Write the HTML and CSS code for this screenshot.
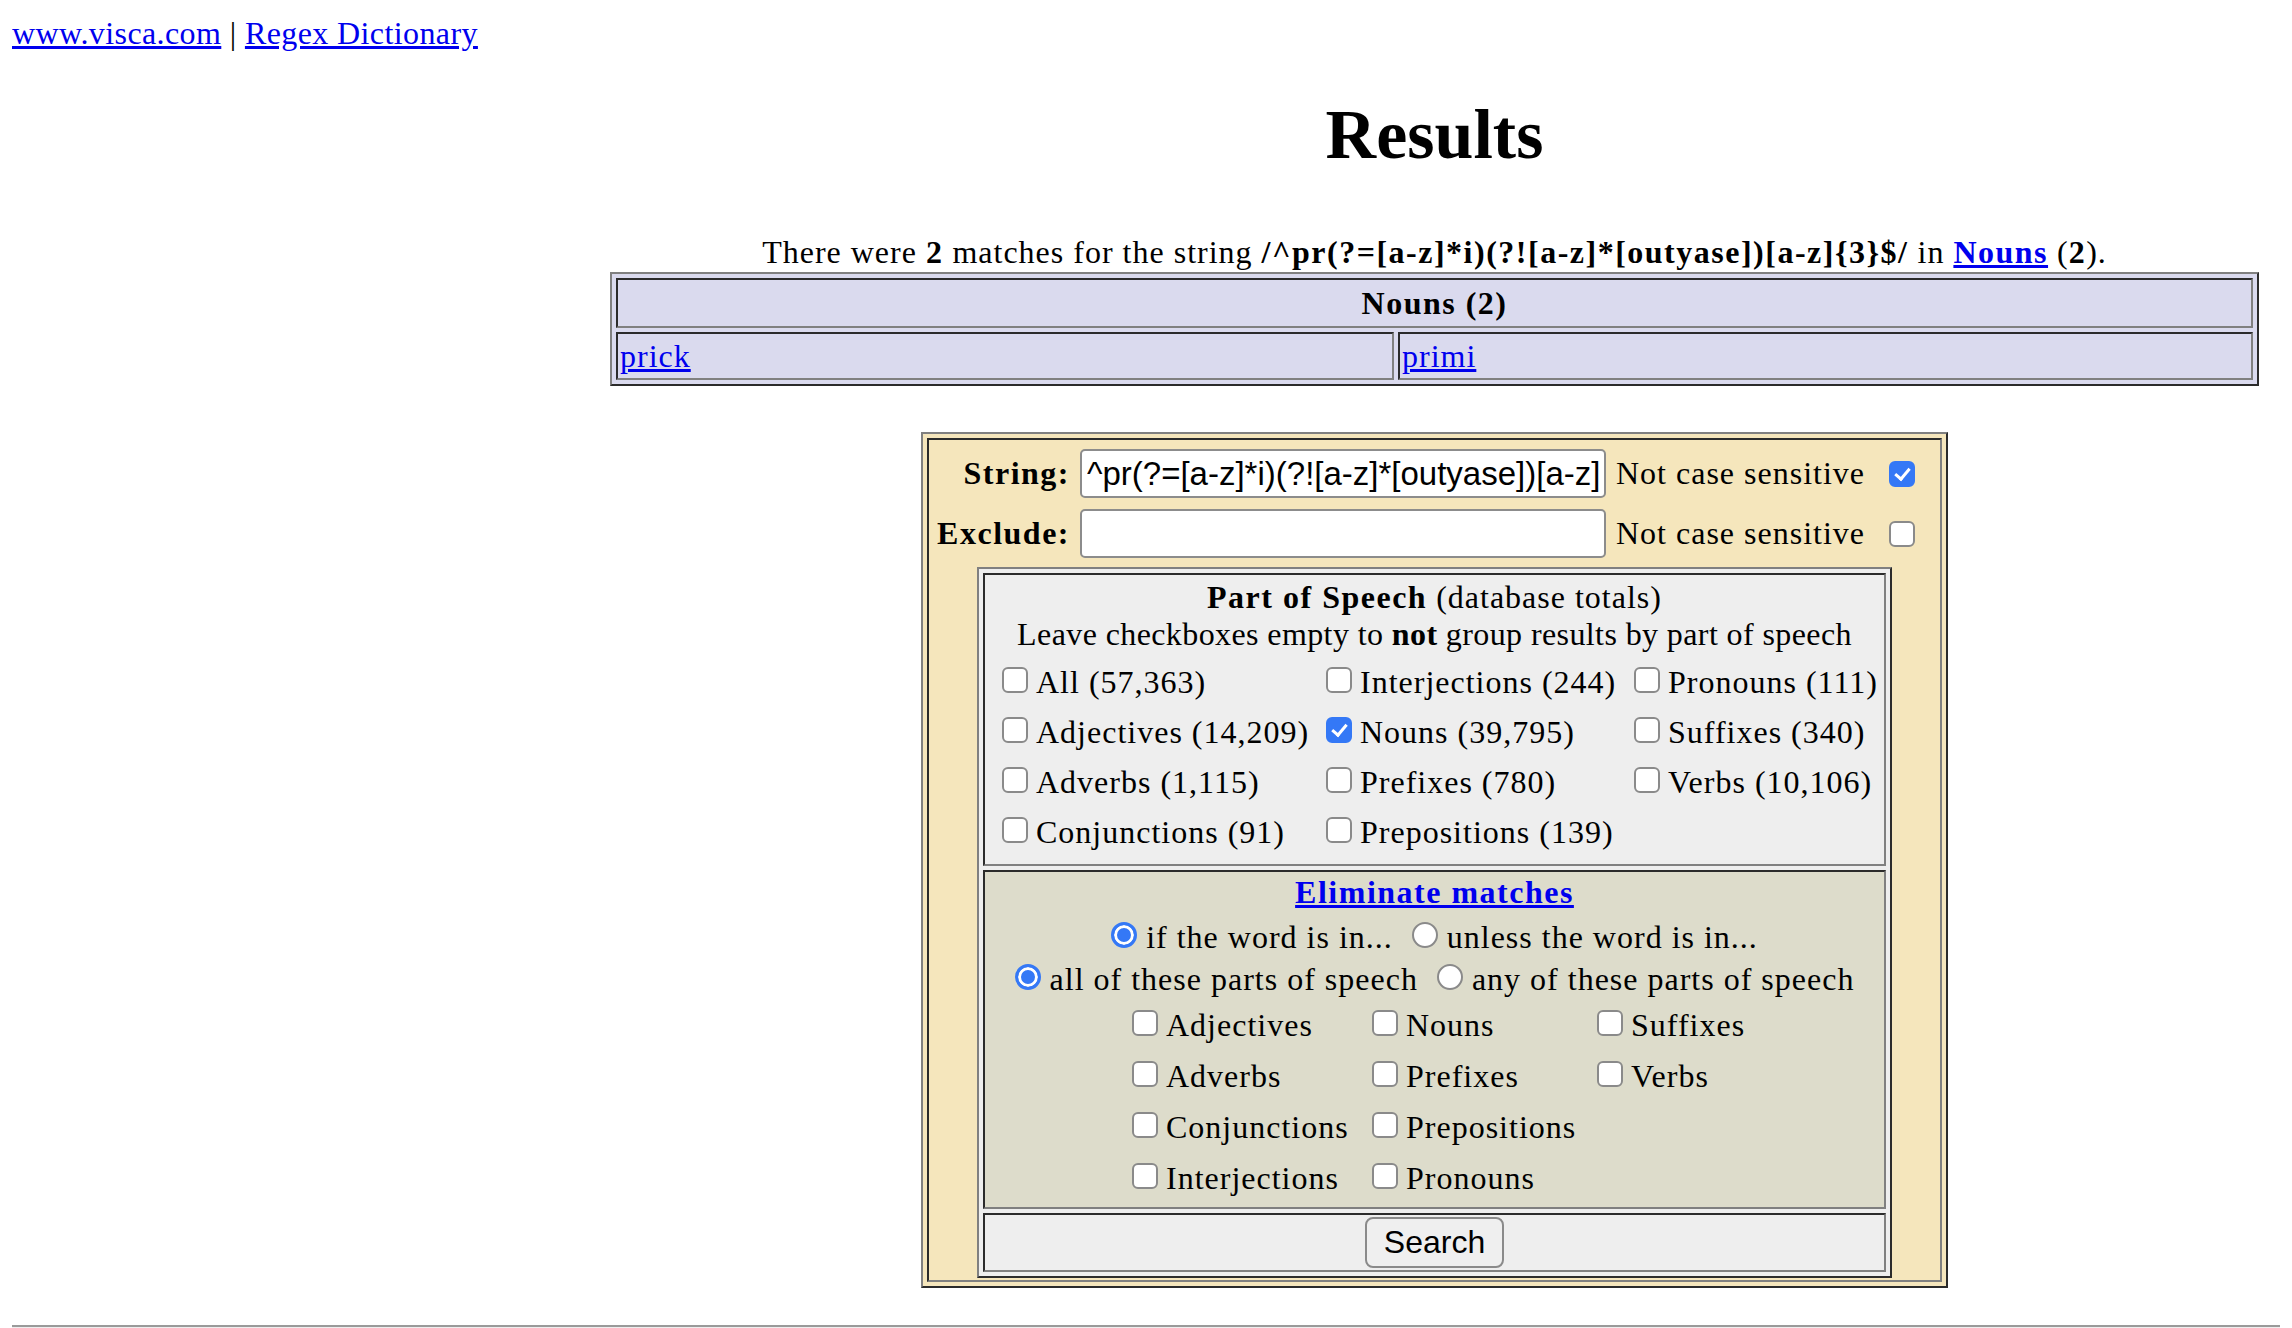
FILE: index.html
```html
<!DOCTYPE html>
<html lang="en">
<head>
  <meta charset="UTF-8">
  <title>Regex Dictionary - Results</title>
  <link rel="stylesheet" href="styles.css">
</head>
<body>
  <div class="crumbs"><a href="#">www.visca.com</a> | <a href="#">Regex Dictionary</a></div>

  <div class="layout">
    <div class="side"></div>

    <div class="main">
      <h1>Results</h1>

      <p class="summary">There were <b>2</b> matches for the string <b>/^pr(?=[a-z]*i)(?![a-z]*[outyase])[a-z]{3}$/</b> in <a href="#nouns"><b>Nouns</b></a> (<b>2</b>).</p>
      <table class="words" id="nouns">
        <tr><th colspan="2">Nouns (2)</th></tr>
        <tr>
          <td class="first"><a href="#">prick</a></td>
          <td><a href="#">primi</a></td>
        </tr>
      </table>

      <form class="search-box">
        <div class="search-cell">
          <div class="fields">
            <label class="field-label" for="str">String:</label>
            <input class="text-input" type="text" id="str" name="str" value="^pr(?=[a-z]*i)(?![a-z]*[outyase])[a-z]{3}$">
            <span>Not case sensitive</span>
            <input class="box" type="checkbox" name="ic" checked>

            <label class="field-label" for="exc">Exclude:</label>
            <input class="text-input" type="text" id="exc" name="exc">
            <span>Not case sensitive</span>
            <input class="box" type="checkbox" name="exc_ic">
          </div>

          <div class="pos-table">
            <div class="pos-cell">
              <div class="pos-title">
                <b>Part of Speech</b> (database totals)<br>
                <span class="hint">Leave checkboxes empty to <b>not</b> group results by part of speech</span>
              </div>
              <div class="pos-grid">
                <label><input class="box" type="checkbox" name="all">All (57,363)</label>
                <label><input class="box" type="checkbox" name="interj">Interjections (244)</label>
                <label><input class="box" type="checkbox" name="pron">Pronouns (111)</label>
                <label><input class="box" type="checkbox" name="adj">Adjectives (14,209)</label>
                <label><input class="box" type="checkbox" name="noun" checked>Nouns (39,795)</label>
                <label><input class="box" type="checkbox" name="suf">Suffixes (340)</label>
                <label><input class="box" type="checkbox" name="adv">Adverbs (1,115)</label>
                <label><input class="box" type="checkbox" name="pre">Prefixes (780)</label>
                <label><input class="box" type="checkbox" name="verb">Verbs (10,106)</label>
                <label><input class="box" type="checkbox" name="conj">Conjunctions (91)</label>
                <label><input class="box" type="checkbox" name="prep">Prepositions (139)</label>
              </div>
            </div>

            <div class="elim-cell">
              <div class="elim-title"><a href="#">Eliminate matches</a></div>
              <div class="choice choice-top">
                <label><input class="dot" type="radio" name="elim" checked>if the word is in...</label>
                <label><input class="dot" type="radio" name="elim">unless the word is in...</label>
              </div>
              <div class="choice">
                <label><input class="dot" type="radio" name="mode" checked>all of these parts of speech</label>
                <label><input class="dot" type="radio" name="mode">any of these parts of speech</label>
              </div>
              <div class="elim-grid">
                <label><input class="box" type="checkbox" name="x_adj">Adjectives</label>
                <label><input class="box" type="checkbox" name="x_noun">Nouns</label>
                <label><input class="box" type="checkbox" name="x_suf">Suffixes</label>
                <label><input class="box" type="checkbox" name="x_adv">Adverbs</label>
                <label><input class="box" type="checkbox" name="x_pre">Prefixes</label>
                <label><input class="box" type="checkbox" name="x_verb">Verbs</label>
                <label><input class="box" type="checkbox" name="x_conj">Conjunctions</label>
                <label><input class="box" type="checkbox" name="x_prep">Prepositions</label>
                <span></span>
                <label><input class="box" type="checkbox" name="x_interj">Interjections</label>
                <label><input class="box" type="checkbox" name="x_pron">Pronouns</label>
              </div>
            </div>

            <div class="submit-cell">
              <button type="submit">Search</button>
            </div>
          </div>
        </div>
      </form>
    </div>
  </div>

  <hr>
</body>
</html>
```

FILE: styles.css
```css
body { margin: 15px 12px; font: 32px "Liberation Serif", "Times New Roman", Times, serif; letter-spacing: 1px; color: #000; background: #fff; }
b, th, .field-label, .elim-title { letter-spacing: 1.5px; }
a { color: #0000ee; }
.crumbs { line-height: 37px; letter-spacing: 0.4px; }

.layout { display: grid; grid-template-columns: 598px 1649px; }
h1 { font-size: 70px; line-height: 80px; margin: 43px 0 59px; text-align: center; letter-spacing: 0; }
.summary { margin: 0 0 1px; line-height: 37px; text-align: center; }

/* old-school table borders: raised frame, sunken cells */
.words, .search-box, .pos-table { border: 2px solid; border-color: #808080 #2b2b2b #2b2b2b #808080; }
.words th, .words td, .search-cell, .pos-cell, .elim-cell, .submit-cell { border: 2px solid; border-color: #2b2b2b #808080 #808080 #2b2b2b; }

.words { width: 100%; border-collapse: separate; border-spacing: 4px; background: #dadaee; }
.words th, .words td { padding: 2px; }
.words th { line-height: 42px; }
.words td { line-height: 40px; text-align: left; }
.words td.first { width: 770px; }

.search-box { box-sizing: border-box; width: 1027px; margin: 46px auto 0; padding: 4px; background: #f5e6bc; }
.search-cell { padding: 2px; }

.fields { display: grid; grid-template-columns: 139px 526px 263px 26px; grid-auto-rows: 49px; column-gap: 10px; row-gap: 11px; align-items: center; padding-top: 7px; line-height: 37px; white-space: nowrap; }
.field-label { font-weight: bold; text-align: right; }
.text-input { box-sizing: border-box; width: 526px; height: 49px; margin: 0; padding: 0 5px; font: 33px "Liberation Sans", Arial, sans-serif; letter-spacing: 0; color: #000; border: 2px solid #8c8c8c; border-radius: 5px; background: #fff; }

.pos-table { box-sizing: border-box; width: 915px; margin: 9px auto 0; padding: 4px; background: #eee; display: flex; flex-direction: column; gap: 4px; }
.pos-cell { background: #eee; padding: 4px 0 7px; }
.pos-title { text-align: center; line-height: 37px; }
.hint, .hint b { letter-spacing: 0.4px; }
.pos-grid { display: grid; grid-template-columns: 324px 308px auto; grid-auto-rows: 50px; line-height: 50px; padding-left: 17px; margin-top: 4px; white-space: nowrap; }

.elim-cell { background: #dddccb; padding: 2px 0 3px; text-align: center; }
.elim-title { line-height: 37px; font-weight: bold; }
.choice { line-height: 42px; white-space: nowrap; }
.choice-top { margin-top: 5px; }
.choice label + label { margin-left: 10px; }
.elim-grid { display: grid; grid-template-columns: 240px 225px auto; grid-auto-rows: 51px; line-height: 51px; padding-left: 147px; text-align: left; white-space: nowrap; }

.submit-cell { background: #eee; padding: 2px; display: flex; justify-content: center; }
.submit-cell button { height: 51px; margin: 0; padding: 0 17px; font: 32px "Liberation Sans", Arial, sans-serif; letter-spacing: 0; color: #000; background: #efefef; border: 2px solid #8a8a8a; border-radius: 8px; }

/* checkboxes and radios drawn by hand */
.box, .dot { appearance: none; -webkit-appearance: none; box-sizing: border-box; width: 26px; height: 26px; margin: 0 8px 0 0; border: 2px solid #8a8a8a; background: #fff; vertical-align: baseline; position: relative; }
.box { border-radius: 6px; }
.box:checked { background: #3478f6; border-color: #3478f6; }
.box:checked::after { content: ""; position: absolute; left: 7px; top: 2px; width: 6px; height: 12px; border: solid #fff; border-width: 0 3px 3px 0; transform: rotate(40deg); }
.fields .box { margin: 0; }
.dot { border-radius: 50%; margin-right: 9px; }
.dot:checked { border: 3px solid #3478f6; background: #3478f6; box-shadow: inset 0 0 0 3px #fff; }

hr { margin: 37px 0 0; border: 0; border-top: 2px solid #9a9a9a; border-bottom: 2px solid #eee; }
```
